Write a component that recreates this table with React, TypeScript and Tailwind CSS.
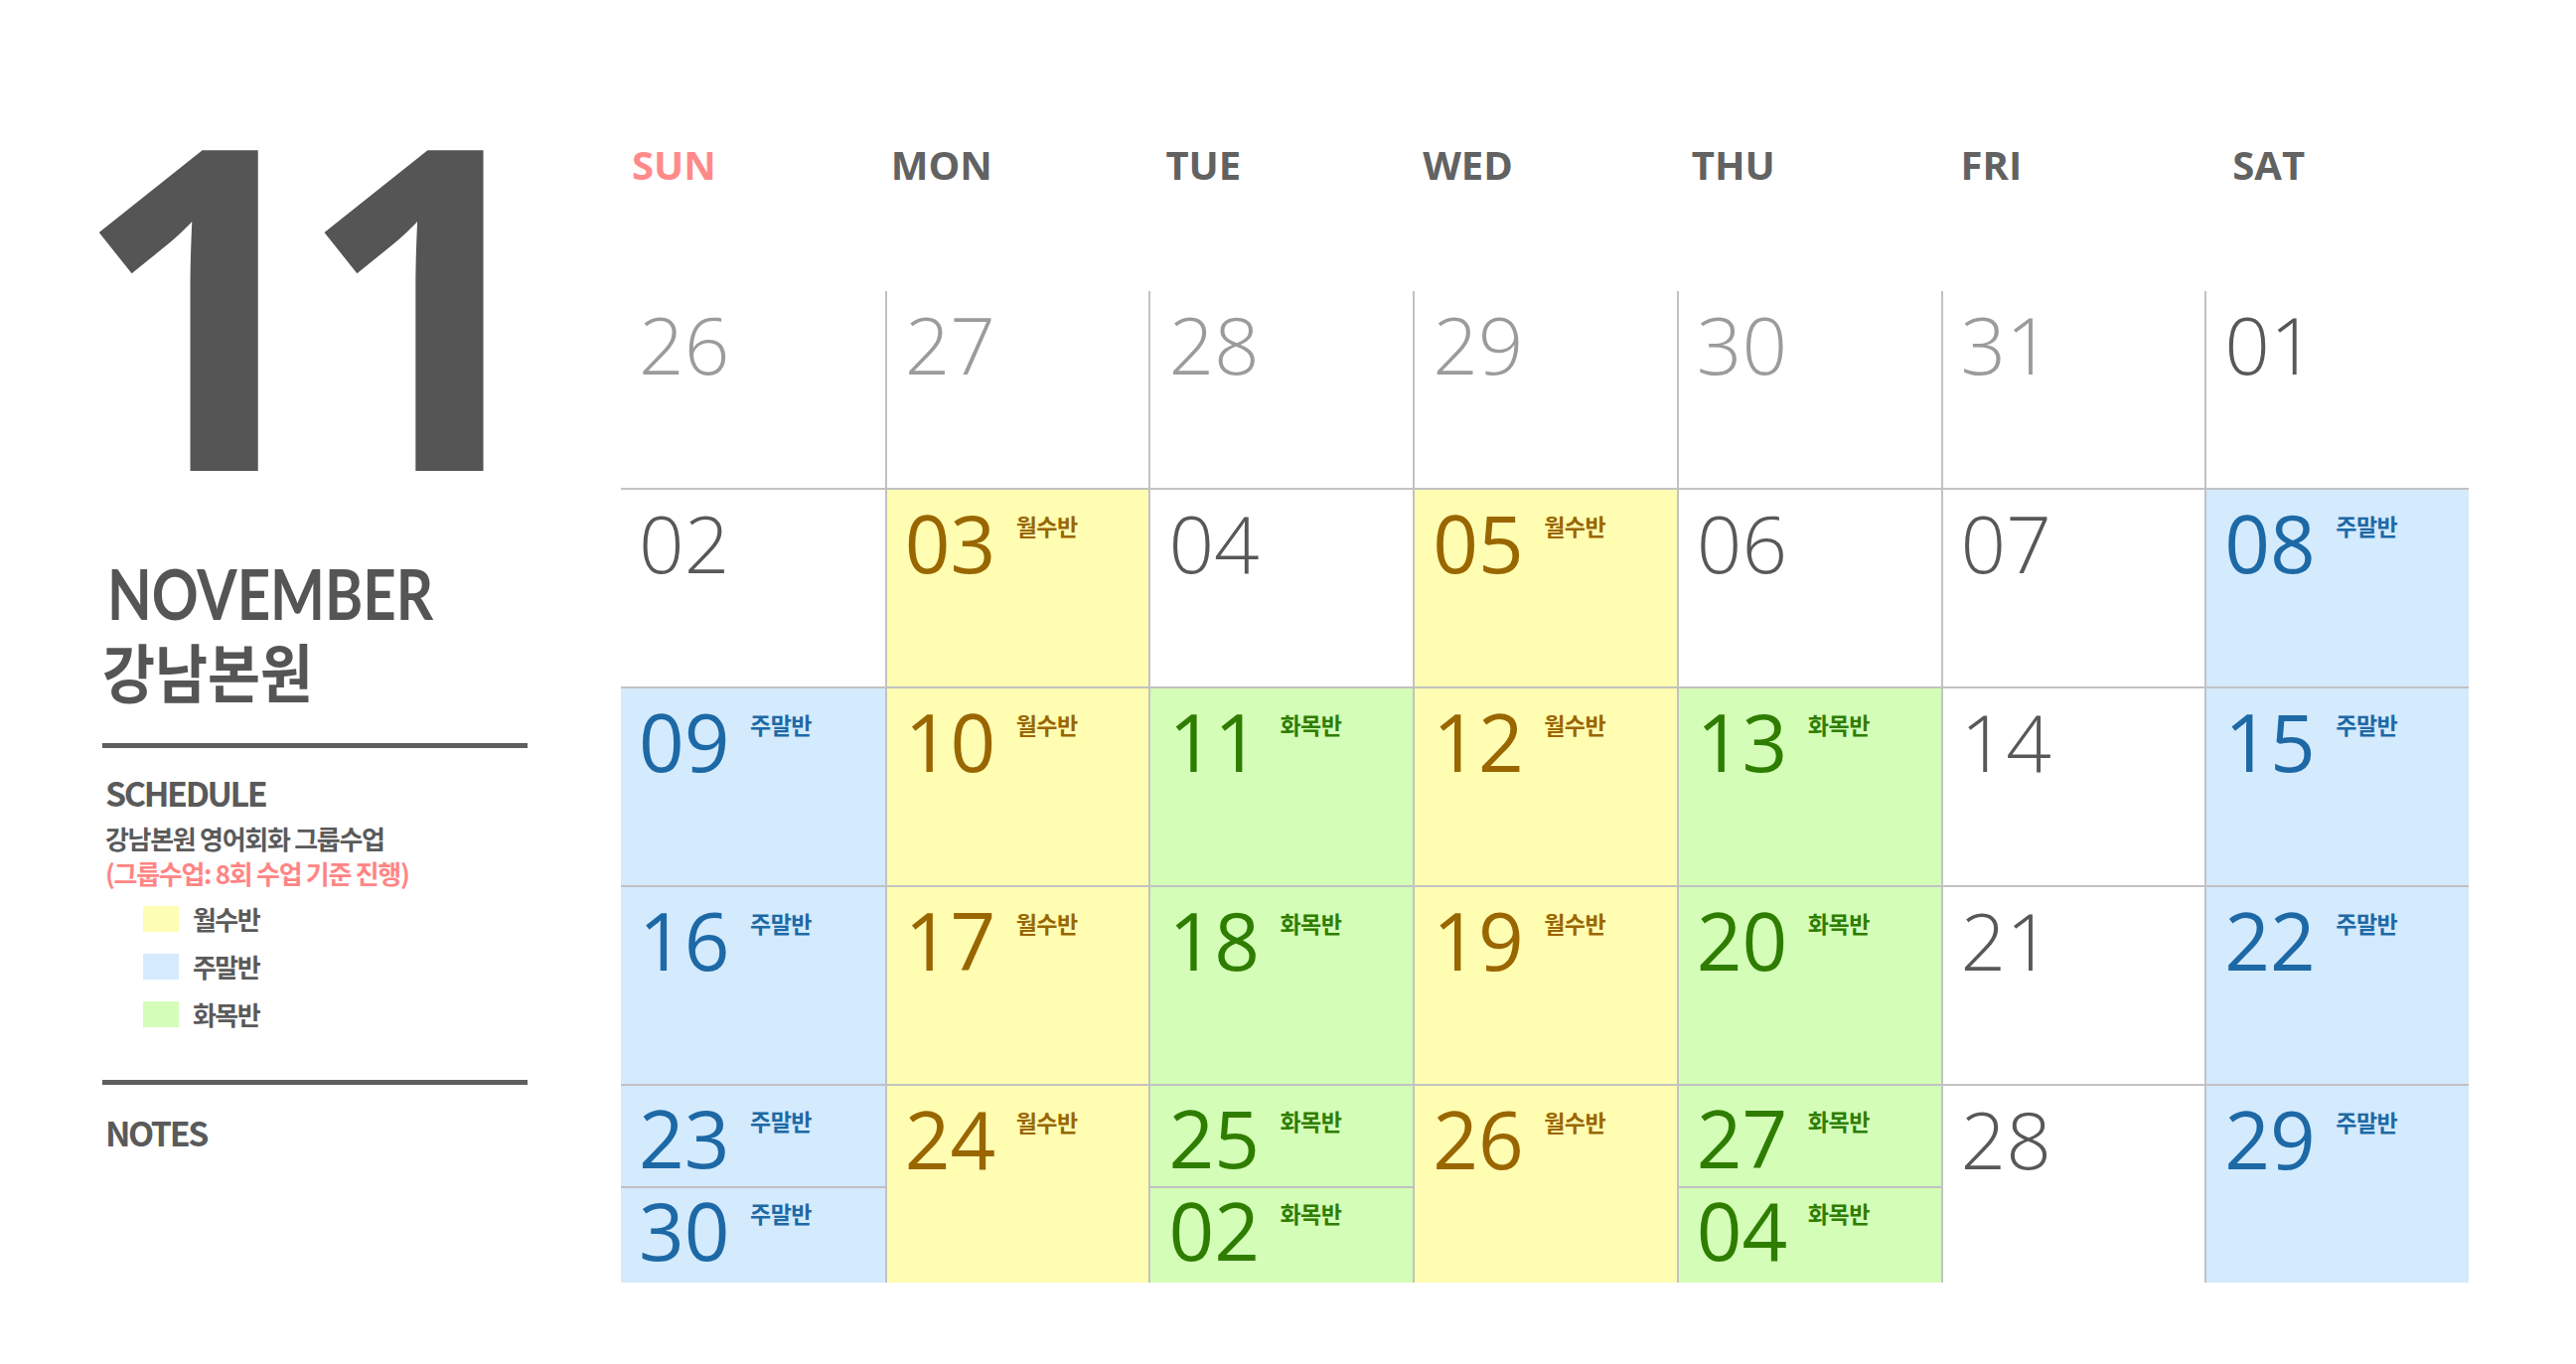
type Kind = "prev" | "plain" | "mw" | "tt" | "we";

const kinds: Record<Kind, { bg: string; num: string; label?: string }> = {
  prev: { bg: "bg-white", num: "text-[#9b9b9b] font-light" },
  plain: { bg: "bg-white", num: "text-[#585858] font-light" },
  mw: { bg: "bg-[#fefdb1]", num: "text-[#996600] font-normal", label: "월수반" },
  tt: { bg: "bg-[#d4feb8]", num: "text-[#2f7d00] font-normal", label: "화목반" },
  we: { bg: "bg-[#d4eafd]", num: "text-[#1d69a6] font-normal", label: "주말반" },
};

const weekdays = [
  { name: "SUN", color: "text-[#ff8a8a]", pad: "pl-[11px]" },
  { name: "MON", color: "text-[#626262]", pad: "pl-[6px]" },
  { name: "TUE", color: "text-[#626262]", pad: "pl-[17px]" },
  { name: "WED", color: "text-[#626262]", pad: "pl-[10px]" },
  { name: "THU", color: "text-[#626262]", pad: "pl-[15px]" },
  { name: "FRI", color: "text-[#626262]", pad: "pl-[20px]" },
  { name: "SAT", color: "text-[#626262]", pad: "pl-[28px]" },
];

type Entry = { day: string; kind: Kind };
type Cell = Entry | [Entry, Entry];

const e = (day: string, kind: Kind): Entry => ({ day, kind });

const weeks: Cell[][] = [
  [e("26", "prev"), e("27", "prev"), e("28", "prev"), e("29", "prev"), e("30", "prev"), e("31", "prev"), e("01", "plain")],
  [e("02", "plain"), e("03", "mw"), e("04", "plain"), e("05", "mw"), e("06", "plain"), e("07", "plain"), e("08", "we")],
  [e("09", "we"), e("10", "mw"), e("11", "tt"), e("12", "mw"), e("13", "tt"), e("14", "plain"), e("15", "we")],
  [e("16", "we"), e("17", "mw"), e("18", "tt"), e("19", "mw"), e("20", "tt"), e("21", "plain"), e("22", "we")],
  [
    [e("23", "we"), e("30", "we")],
    e("24", "mw"),
    [e("25", "tt"), e("02", "tt")],
    e("26", "mw"),
    [e("27", "tt"), e("04", "tt")],
    e("28", "plain"),
    e("29", "we"),
  ],
];

const DayEntry = ({ entry }: { entry: Entry }) => {
  const k = kinds[entry.kind];
  return (
    <div className="flex items-start pl-[18px]">
      <span className={`w-[112px] shrink-0 font-['Open_Sans',sans-serif] text-[80px] leading-none ${k.num}`}>
        {entry.day}
      </span>
      {k.label && (
        <span
          className={`mt-[12px] font-['Noto_Sans_CJK_KR',sans-serif] text-[23px] font-bold leading-none tracking-[-0.5px] ${k.num.split(" ")[0]}`}
        >
          {k.label}
        </span>
      )}
    </div>
  );
};

const LegendRow = ({ color, label }: { color: string; label: string }) => (
  <div className="ml-[41px] flex items-center gap-[14px]">
    <div className={`h-[26px] w-[36px] ${color}`} />
    <span className="text-[26px] font-bold leading-none tracking-[-0.06em] text-[#5a5a5a]">{label}</span>
  </div>
);

const App = () => {
  return (
    <div className="flex h-[1373px] w-[2593px] bg-white font-['Noto_Sans_CJK_KR',sans-serif]">
      <aside className="w-[625px] shrink-0 pl-[103px] text-[#555555]">
        <div className="ml-[-30px] mt-[73px] h-[452px] font-['Open_Sans',sans-serif] text-[452px] font-bold leading-none tracking-[-0.07em]">
          11
        </div>
        <div className="ml-[5px] mt-[37px] origin-left scale-x-[0.83] font-['Lato',sans-serif] text-[70px] font-bold leading-none">
          NOVEMBER
        </div>
        <div className="mt-[10px] origin-left scale-x-[0.9] text-[64px] font-bold leading-none">강남본원</div>
        <div className="mt-[42px] h-[5px] w-[428px] bg-[#5f5f5f]" />
        <div className="ml-[3px] mt-[28px] text-[34px] font-bold leading-none tracking-[-0.07em] text-[#5a5a5a]">
          SCHEDULE
        </div>
        <div className="ml-[3px] mt-[16px] text-[26px] font-bold leading-none tracking-[-0.05em] text-[#5a5a5a]">
          강남본원 영어회화 그룹수업
        </div>
        <div className="ml-[3px] mt-[9px] text-[26px] font-bold leading-none tracking-[-0.05em] text-[#ff8585]">
          (그룹수업: 8회 수업 기준 진행)
        </div>
        <div className="mt-[20px] flex flex-col gap-[22px]">
          <LegendRow color="bg-[#fdfdb5]" label="월수반" />
          <LegendRow color="bg-[#d6ebfd]" label="주말반" />
          <LegendRow color="bg-[#d4fdb9]" label="화목반" />
        </div>
        <div className="mt-[53px] h-[5px] w-[428px] bg-[#5f5f5f]" />
        <div className="ml-[3px] mt-[31px] text-[34px] font-bold leading-none tracking-[-0.07em] text-[#5a5a5a]">
          NOTES
        </div>
      </aside>

      <main className="w-[1860px] shrink-0 pt-[146px]">
        <div className="grid h-[147px] grid-cols-7">
          {weekdays.map((w) => (
            <div
              key={w.name}
              className={`font-['Open_Sans',sans-serif] text-[40px] font-bold leading-none ${w.color} ${w.pad}`}
            >
              {w.name}
            </div>
          ))}
        </div>

        <div className="grid grid-cols-7 grid-rows-[198px_200px_200px_200px_200px]">
          {weeks.map((week, r) =>
            week.map((cell, c) => {
              const first = Array.isArray(cell) ? cell[0] : cell;
              const edges = `${c > 0 ? "border-l-2" : ""} ${r > 0 ? "border-t-2" : ""}`;
              if (Array.isArray(cell)) {
                return (
                  <div key={`${r}-${c}`} className={`flex flex-col border-[#c2c2c2] ${edges} ${kinds[first.kind].bg}`}>
                    <div className="h-[101px] pt-[12px]">
                      <DayEntry entry={cell[0]} />
                    </div>
                    <div className="flex-1 border-t-2 border-[#c2c2c2] pt-[2px]">
                      <DayEntry entry={cell[1]} />
                    </div>
                  </div>
                );
              }
              return (
                <div key={`${r}-${c}`} className={`border-[#c2c2c2] pt-[13px] ${edges} ${kinds[first.kind].bg}`}>
                  <DayEntry entry={cell} />
                </div>
              );
            })
          )}
        </div>
      </main>
    </div>
  );
};

export default App;
